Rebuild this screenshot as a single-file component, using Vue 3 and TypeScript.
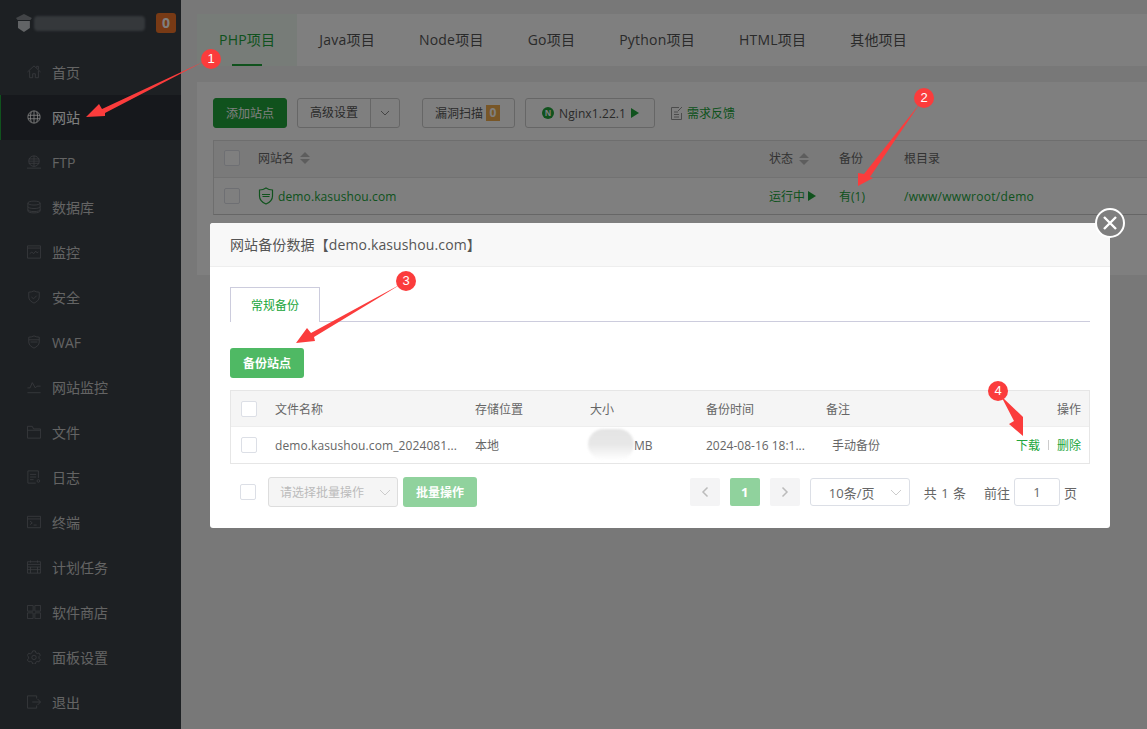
<template>
  <div class="page">
    <aside class="sidebar">
      <div class="brand">
        <svg class="brand-logo" width="18" height="20" viewBox="0 0 18 20">
          <path d="M1 5 9 1l8 4-1.500 2h-13z" fill="#85898e" />
          <path d="M3 8h12v7l-6 4-6-4z" fill="#c4c8cc" />
        </svg>
        <div class="brand-blur"></div>
        <span class="brand-badge">0</span>
      </div>
      <nav>
        <a v-for="item in menu" :key="item.label" class="menu-item" :class="{ active: item.active }">
          <svg class="menu-icon" width="14" height="14" viewBox="0 0 16 16">
            <path v-for="d in item.icon" :key="d" :d="d" />
          </svg>
          <span>{{ item.label }}</span>
        </a>
      </nav>
    </aside>

    <main class="main">
      <div class="tabs">
        <span v-for="(tab, i) in projectTabs" :key="tab" class="tab" :class="{ on: i === 0 }">{{ tab }}</span>
      </div>
      <section class="card">
        <div class="toolbar">
          <button class="btn btn-primary">添加站点</button>
          <div class="split">
            <span class="split-label">高级设置</span>
            <span class="split-arrow">
              <svg width="10" height="6" viewBox="0 0 10 6"><path d="M1 1l4 4 4-4" fill="none" stroke="#888" /></svg>
            </span>
          </div>
          <button class="btn scan">漏洞扫描 <em>0</em></button>
          <button class="btn nginx">
            <i class="nginx-dot">N</i>
            Nginx1.22.1
            <i class="play"></i>
          </button>
          <a class="feedback">
            <svg width="14" height="15" viewBox="0 0 14 15" fill="none" stroke="#999">
              <path d="M9 1.500H1.500v12h10V7M4 6h4M4 8.500h5M4 11h5M8 5l4-4" />
            </svg>
            需求反馈
          </a>
        </div>
        <div class="site-table">
          <div class="site-row head">
            <span class="check"></span>
            <span class="cell-name">网站名 <i class="sort"></i></span>
            <span>状态 <i class="sort"></i></span>
            <span>备份</span>
            <span>根目录</span>
          </div>
          <div class="site-row">
            <span class="check"></span>
            <span class="cell-name link">
              <svg width="16" height="18" viewBox="0 0 16 18" fill="none" stroke="#20a53a" stroke-width="1.200">
                <path d="M8 1c2 1.400 4 2 6.500 2v6c0 3.500-3 6.500-6.500 8-3.500-1.500-6.500-4.500-6.500-8V3C4 3 6 2.400 8 1z" />
                <path d="M4 7.500h8M4.500 9.500h7" stroke-width="1" />
              </svg>
              demo.kasushou.com
            </span>
            <span class="link">运行中 <i class="play"></i></span>
            <span class="link">有(1)</span>
            <span class="link path">/www/wwwroot/demo</span>
          </div>
        </div>
      </section>
    </main>

    <div class="shade"></div>

    <div class="modal">
      <div class="modal-title">网站备份数据【demo.kasushou.com】</div>
      <button class="modal-close">
        <svg width="16" height="16" viewBox="0 0 16 16"><path d="M2 2l12 12M14 2 2 14" stroke="#fff" stroke-width="2.400" /></svg>
      </button>
      <div class="modal-body">
        <div class="modal-tabs"><span class="modal-tab">常规备份</span></div>
        <button class="btn-backup">备份站点</button>
        <div class="backup-table">
          <div class="backup-row head">
            <span class="check"></span>
            <span>文件名称</span>
            <span>存储位置</span>
            <span>大小</span>
            <span>备份时间</span>
            <span>备注</span>
            <span class="ops">操作</span>
          </div>
          <div class="backup-row">
            <span class="check"></span>
            <span class="file">demo.kasushou.com_2024081...</span>
            <span>本地</span>
            <span class="size">MB<i class="size-blur"></i></span>
            <span>2024-08-16 18:1...</span>
            <span class="note">手动备份</span>
            <span class="ops green">下载<i class="sep"></i>删除</span>
          </div>
        </div>
        <div class="footer">
          <div class="batch">
            <span class="check"></span>
            <div class="batch-select">
              请选择批量操作
              <svg width="12" height="7" viewBox="0 0 12 7"><path d="M1 1l5 5 5-5" fill="none" stroke="#ccc" /></svg>
            </div>
            <button class="batch-btn">批量操作</button>
          </div>
          <div class="pager">
            <span class="page-btn">
              <svg width="8" height="12" viewBox="0 0 8 12"><path d="M6.500 1.500 2 6l4.500 4.500" fill="none" stroke="#bbb" stroke-width="1.500" /></svg>
            </span>
            <span class="page-btn current">1</span>
            <span class="page-btn">
              <svg width="8" height="12" viewBox="0 0 8 12"><path d="M1.500 1.500 6 6l-4.500 4.500" fill="none" stroke="#bbb" stroke-width="1.500" /></svg>
            </span>
            <div class="size-select">
              10条/页
              <svg width="12" height="7" viewBox="0 0 12 7"><path d="M1 1l5 5 5-5" fill="none" stroke="#ccc" /></svg>
            </div>
            <span class="total">共 1 条</span>
            <span class="goto">前往<span class="goto-input">1</span>页</span>
          </div>
        </div>
      </div>
    </div>

    <svg class="arrows" width="1147" height="729" viewBox="0 0 1147 729">
      <polygon v-for="a in arrows" :key="a" :points="a" fill="#fb3c3c" />
    </svg>
    <span v-for="m in markers" :key="m.n" class="marker" :style="{ left: m.x + 'px', top: m.y + 'px' }">{{ m.n }}</span>
  </div>
</template>

<script setup lang="ts">
interface MenuItem {
  label: string
  icon: string[]
  active?: boolean
}

const menu: MenuItem[] = [
  { label: '首页', icon: ['M.5 8 8 1l7.500 7M11 3V1.500h2v3.500M3 6.500v8h3.500V10h3v4.500H13v-8'] },
  {
    label: '网站',
    active: true,
    icon: ['M8 1a7 7 0 1 0 0 14A7 7 0 0 0 8 1z', 'M1 6h14M1 10h14M8 1v14M5 2c-1.500 3-1.500 9 0 12M11 2c1.500 3 1.500 9 0 12']
  },
  { label: 'FTP', icon: ['M8 1a6 6 0 1 0 0 12A6 6 0 0 0 8 1z', 'M2 7h12M8 1v12M0 15h16M2 4.500h12M2 9.500h12'] },
  { label: '数据库', icon: ['M1 3.500C1 .5 15 .5 15 3.500v9c0 3-14 3-14 0zM1 3.500c0 3 14 3 14 0M1 7.500c0 3 14 3 14 0M1 11c0 3 14 3 14 0'] },
  { label: '监控', icon: ['M.5 1h15v14H.5zM.5 3.500h15M3 10l2.500-2 2 2 2.500-3 1.500 2L13 8'] },
  { label: '安全', icon: ['M8 1c2 1 4 1.500 6 1.500V8c0 3.500-3 5.500-6 7-3-1.500-6-3.500-6-7V2.500C4 2.500 6 2 8 1zM5 8l2.500 2L11 6.500'] },
  { label: 'WAF', icon: ['M8 1c2 1 4 1.500 6 1.500V8c0 3.500-3 5.500-6 7-3-1.500-6-3.500-6-7V2.500C4 2.500 6 2 8 1zM2 5.500h12M4 8h8'] },
  { label: '网站监控', icon: ['M.5 9h3L6 3l3.500 6 2-2h4M.5 14.500h15'] },
  { label: '文件', icon: ['M.5 15V1.500h5.500l1.500 3h8V15zM.5 6h15'] },
  { label: '日志', icon: ['M13 9V1H1v14h9M3.500 5h7M3.500 8h7M3.500 11h4M13 11a1.500 1.500 0 1 0 0 3 1.500 1.500 0 0 0 0-3z'] },
  { label: '终端', icon: ['M.5 1.500h15v13H.5zM.5 4.500h15M3.500 7l2.500 2-2.500 2M7.500 11.500H11'] },
  { label: '计划任务', icon: ['M.5 2h15v13H.5zM.5 5h15M.5 8h15M.5 11h15M4 8v7M12 8v7M4 .5V3M12 .5V3'] },
  { label: '软件商店', icon: ['M.5.5H7V7H.5zM9 .5h6.500V7H9zM.5 9H7v6.500H.5zM9 9h6.500v6.500H9z'] },
  {
    label: '面板设置',
    icon: ['M6.500 1h3l.5 2 1.700 1 2-.6 1.500 2.600-1.500 1.500v2l1.500 1.500-1.500 2.600-2-.6-1.700 1-.5 2h-3l-.5-2-1.700-1-2 .6L.3 11.400l1.500-1.500v-2L.3 6.400 1.800 3.800l2 .6 1.700-1z', 'M8 6a2.500 2.500 0 1 0 0 5 2.500 2.500 0 0 0 0-5z']
  },
  { label: '退出', icon: ['M11 4V1H.5v14H11v-3M6 8h9M12 4.500 15.500 8 12 11.500'] }
]

const projectTabs = ['PHP项目', 'Java项目', 'Node项目', 'Go项目', 'Python项目', 'HTML项目', '其他项目']

// callout arrows sit on top of the screenshot, tail near the marker and tip on the target
const arrows = [
  '86,117 99,104 102,109 205,61 105,113 105,116',
  '858,186 858,173 864,174 921,102 870,177 873,178',
  '296,343 307,328 311,333 403,283 314,337 315,341',
  '1023,436 1009,424 1014,421 1001,396 1021,415 1023,417'
]

const markers = [
  { n: 1, x: 201, y: 49 },
  { n: 2, x: 914, y: 88 },
  { n: 3, x: 396, y: 271 },
  { n: 4, x: 988, y: 381 }
]
</script>

<style>
html,
body {
  margin: 0;
  overflow: hidden;
}
</style>

<style scoped>
.page {
  position: relative;
  display: flex;
  height: 729px;
  overflow: hidden;
  background: #f0f0f0;
  font-family: "Open Sans", "Noto Sans CJK SC", sans-serif;
  font-size: 12px;
  color: #666;
}

.sidebar {
  flex: 0 0 181px;
  min-width: 0;
  background: #3a4046;
}

.brand {
  display: flex;
  align-items: center;
  height: 50px;
  padding: 0 5px 4px 15px;
  box-sizing: border-box;
}

.brand-blur {
  width: 112px;
  height: 15px;
  margin: 0 11px 0 1px;
  border-radius: 4px;
  background: #6a7077;
  filter: blur(1px);
}

.brand-badge {
  flex: none;
  width: 20px;
  height: 20px;
  border-radius: 3px;
  background: #f0742a;
  color: #fff;
  font-size: 14px;
  font-weight: 700;
  line-height: 20px;
  text-align: center;
}

.menu-item {
  display: flex;
  align-items: center;
  height: 45px;
  padding: 0 0 1px 27px;
  box-sizing: border-box;
  color: #c8c8c8;
  font-size: 14px;
}

.menu-item.active {
  padding-left: 26px;
  border-left: 1px solid #20a53a;
  background: #2c3138;
  color: #fff;
}

.menu-icon {
  flex: none;
  margin-right: 11px;
  fill: none;
  stroke: #70747a;
}

.menu-item.active .menu-icon {
  stroke: #fff;
}

.main {
  flex: 1;
  min-width: 0;
  padding: 14px 0 0 16px;
}

.tabs {
  display: flex;
  height: 52px;
  background: #fff;
}

.tab {
  position: relative;
  padding: 0 22px;
  font-size: 14px;
  letter-spacing: 0.22px;
  line-height: 52px;
  color: #555;
}

.tab.on {
  background: #eff8f1;
  color: #20a53a;
}

.tab.on::after {
  content: "";
  position: absolute;
  left: 35px;
  bottom: 0;
  width: 30px;
  height: 2px;
  background: #20a53a;
}

.card {
  width: 1000px;
  height: 193px;
  margin-top: 16px;
  padding: 16px;
  box-sizing: border-box;
  background: #fff;
}

.toolbar {
  display: flex;
  align-items: center;
  height: 30px;
  margin-bottom: 12px;
}

.btn {
  height: 30px;
  padding: 0 12px;
  border: 1px solid #ccc;
  border-radius: 3px;
  background: #fff;
  color: #555;
  font: inherit;
  font-size: 12px;
}

.btn-primary {
  width: 74px;
  padding: 0;
  margin-right: 10px;
  border-color: #20a53a;
  background: #20a53a;
  color: #fff;
}

.split {
  display: flex;
  width: 103px;
  height: 30px;
  margin-right: 22px;
  box-sizing: border-box;
  border: 1px solid #ccc;
  border-radius: 3px;
  line-height: 28px;
  color: #555;
}

.split-label {
  width: 72px;
  text-align: center;
  border-right: 1px solid #ccc;
}

.split-arrow {
  display: flex;
  flex: 1;
  align-items: center;
  justify-content: center;
}

.scan {
  display: flex;
  align-items: center;
  gap: 3px;
  width: 93px;
  margin-right: 10px;
}

.scan em {
  width: 14px;
  height: 16px;
  background: #f0ad4e;
  color: #fff;
  font-style: normal;
  font-weight: 700;
  line-height: 16px;
  text-align: center;
}

.nginx {
  display: flex;
  align-items: center;
  gap: 5px;
  width: 130px;
  padding: 0 0 0 16px;
  margin-right: 14px;
  letter-spacing: 0.1px;
}

.nginx-dot {
  width: 12px;
  height: 12px;
  border-radius: 50%;
  background: #20a53a;
  color: #fff;
  font-size: 8px;
  font-style: normal;
  font-weight: 700;
  line-height: 12px;
  text-align: center;
}

.play {
  display: inline-block;
  border-left: 8px solid #20a53a;
  border-top: 5px solid transparent;
  border-bottom: 5px solid transparent;
}

.feedback {
  display: flex;
  align-items: center;
  gap: 3px;
  margin-left: 1px;
  color: #20a53a;
}

.site-table {
  border: 1px solid #ddd;
  border-bottom-color: #ccc;
}

.site-row {
  display: grid;
  grid-template-columns: 44px 511px 70px 65px 1fr;
  align-items: center;
  height: 36px;
  border-top: 1px solid #e5e5e5;
}

.site-row.head {
  height: 34px;
  padding-bottom: 2px;
  border-top: 0;
  background: #f5f5f5;
}

.cell-name {
  display: flex;
  align-items: center;
  gap: 3px;
}

.link {
  color: #20a53a;
  font-size: 12px;
}

.cell-name.link {
  gap: 4px;
  letter-spacing: 0.12px;
}

.path {
  letter-spacing: 0.3px;
}

.sort {
  position: relative;
  display: inline-block;
  width: 10px;
  height: 12px;
  margin-left: 3px;
  vertical-align: -2px;
}

.sort::before,
.sort::after {
  content: "";
  position: absolute;
  left: 0;
  border-left: 5px solid transparent;
  border-right: 5px solid transparent;
}

.sort::before {
  top: 0;
  border-bottom: 5px solid #bbb;
}

.sort::after {
  bottom: 0;
  border-top: 5px solid #bbb;
}

.check {
  display: block;
  width: 14px;
  height: 14px;
  margin-left: 10px;
  border: 1px solid #dcdfe6;
  border-radius: 2px;
  background: #fff;
}

.shade {
  position: absolute;
  inset: 0;
  background: rgba(0, 0, 0, 0.5);
}

.modal {
  position: absolute;
  left: 210px;
  top: 223px;
  width: 900px;
  height: 305px;
  border-radius: 3px;
  background: #fff;
}

.modal-title {
  height: 43px;
  padding-left: 20px;
  border-bottom: 1px solid #eee;
  border-radius: 3px 3px 0 0;
  background: #f8f8f8;
  color: #555;
  font-size: 14px;
  letter-spacing: 0.12px;
  line-height: 43px;
}

.modal-close {
  position: absolute;
  right: -15px;
  top: -15px;
  display: flex;
  align-items: center;
  justify-content: center;
  width: 30px;
  height: 30px;
  padding: 0;
  border: 2px solid #fff;
  border-radius: 50%;
  background: #7f7f7f;
}

.modal-body {
  padding: 20px;
}

.modal-tabs {
  height: 34px;
  border-bottom: 1px solid #ccccdd;
}

.modal-tab {
  display: block;
  width: 88px;
  height: 34px;
  border: 1px solid #ccccdd;
  border-bottom: 0;
  background: #fff;
  color: #20a53a;
  line-height: 36px;
  text-align: center;
}

.btn-backup {
  display: block;
  width: 74px;
  height: 30px;
  margin: 26px 0 12px;
  padding: 0;
  border: 0;
  border-radius: 3px;
  background: #4fb964;
  color: #fff;
  font: inherit;
  font-weight: 700;
}

.backup-table {
  border: 1px solid #e6e6e6;
}

.backup-row {
  display: grid;
  grid-template-columns: 44px 200px 115px 116px 120px 1fr auto;
  align-items: center;
  height: 36px;
  box-sizing: border-box;
}

.backup-row span:not(.check) {
  font-size: 12px;
}

.backup-row .file {
  letter-spacing: 0.1px;
}

.backup-row:not(.head) span {
  color: #666;
}

.backup-row.head {
  border-bottom: 1px solid #eee;
  background: #f5f5f5;
}

.ops {
  padding-right: 8px;
}

.backup-row .ops.green {
  color: #20a53a;
}

.sep {
  display: inline-block;
  width: 1px;
  height: 10px;
  margin: 0 8px;
  background: #ccc;
}

.note {
  padding-left: 6px;
}

.size {
  position: relative;
  padding-left: 44px;
}

.size-blur {
  position: absolute;
  left: -2px;
  top: -8px;
  width: 46px;
  height: 31px;
  border-radius: 18px;
  background: linear-gradient(#e4e4e4, #e8e8e8 50%, #fff);
  filter: blur(1px);
}

.footer {
  display: flex;
  justify-content: space-between;
  align-items: center;
  margin-top: 13px;
}

.batch {
  display: flex;
  align-items: center;
}

.batch-select {
  display: flex;
  align-items: center;
  justify-content: space-between;
  width: 130px;
  height: 30px;
  margin: 0 5px 0 12px;
  padding: 0 6px 0 11px;
  box-sizing: border-box;
  border: 1px solid #ddd;
  border-radius: 3px;
  background: #f5f5f5;
  color: #bbb;
}

.batch-btn {
  width: 74px;
  height: 30px;
  padding: 0;
  border: 0;
  border-radius: 3px;
  background: #90d29d;
  color: #fff;
  font: inherit;
  font-weight: 700;
}

.pager {
  display: flex;
  align-items: center;
  padding-right: 13px;
}

.page-btn {
  display: flex;
  align-items: center;
  justify-content: center;
  width: 30px;
  height: 28px;
  margin-right: 10px;
  border-radius: 2px;
  background: #f4f4f5;
}

.page-btn.current {
  background: #90d29d;
  color: #fff;
  font-size: 13px;
  font-weight: 700;
}

.size-select {
  display: flex;
  align-items: center;
  justify-content: space-between;
  width: 100px;
  height: 28px;
  padding: 0 7px 0 18px;
  box-sizing: border-box;
  border: 1px solid #dcdfe6;
  border-radius: 3px;
  font-size: 13px;
}

.total {
  margin-left: 14px;
  font-size: 13px;
  word-spacing: 1px;
}

.goto {
  display: flex;
  align-items: center;
  margin-left: 18px;
  font-size: 13px;
}

.goto-input {
  width: 46px;
  height: 28px;
  margin: 0 4px;
  box-sizing: border-box;
  border: 1px solid #dcdfe6;
  border-radius: 3px;
  line-height: 26px;
  text-align: center;
}

.arrows {
  position: absolute;
  left: 0;
  top: 0;
  pointer-events: none;
}

.marker {
  position: absolute;
  width: 20px;
  height: 20px;
  border-radius: 50%;
  background: #fb3c3c;
  color: #fff;
  font-family: "Liberation Sans", sans-serif;
  font-size: 13px;
  line-height: 20px;
  text-align: center;
}
</style>
